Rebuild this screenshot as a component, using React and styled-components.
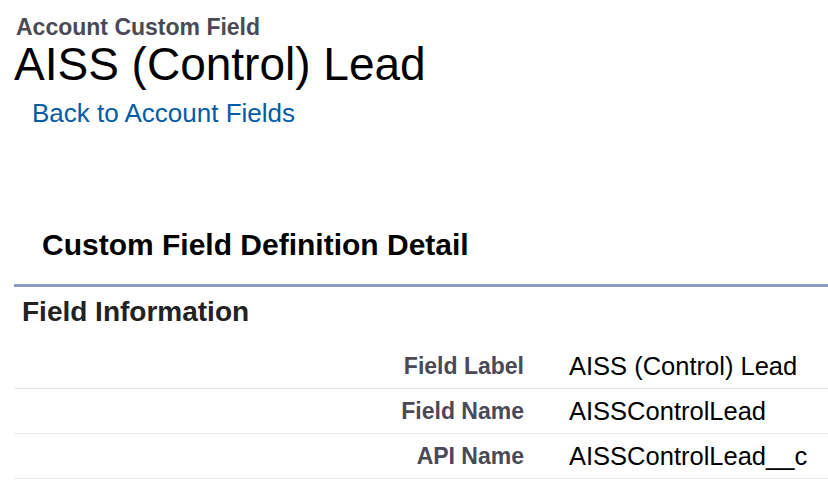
import React from 'react';
import styled, {createGlobalStyle} from 'styled-components';

const GlobalStyle = createGlobalStyle`
    body {
        margin:0;
        background:#fff;
        font-family:"Liberation Sans", Arial, sans-serif;
    }
`;

const Page = styled.div`
    width:828px;
    height:482px;
    overflow:hidden;
    display:flex;
    flex-direction:column;
    padding-left:14px;
    box-sizing:border-box;
`;

const PageType = styled.h2`
    margin:14px 0 0 2px;
    font-size:23px;
    line-height:26px;
    font-weight:700;
    color:#4a4a56;
`;

const PageTitle = styled.h1`
    margin:0;
    font-size:46px;
    line-height:48px;
    font-weight:400;
    color:#000;
`;

const BackLink = styled.a`
    align-self:flex-start;
    display:block;
    margin:10px 0 0 18px;
    font-size:26px;
    line-height:30px;
    color:#015ba7;
    text-decoration:none;
`;

const DetailTitle = styled.h2`
    margin:100px 0 0 28px;
    font-size:30px;
    line-height:34px;
    font-weight:700;
    color:#000;
`;

const Block = styled.div`
    margin-top:22px;
    border-top:3px solid #8e9cc4;
`;

const SectionTitle = styled.h3`
    margin:9px 0 16px 8px;
    font-size:28px;
    line-height:32px;
    font-weight:700;
    color:#222;
`;

const Row = styled.div`
    display:grid;
    grid-template-columns:510px 1fr;
    column-gap:45px;
    height:44px;
    border-bottom:1px solid #e6e6e6;
    align-items:center;
`;

const Label = styled.div`
    text-align:right;
    font-size:23px;
    line-height:44px;
    font-weight:700;
    color:#4a4a56;
`;

const Value = styled.div`
    font-size:25.5px;
    line-height:44px;
    color:#000;
`;

const fields = [
    {label: 'Field Label', value: 'AISS (Control) Lead'},
    {label: 'Field Name', value: 'AISSControlLead'},
    {label: 'API Name', value: 'AISSControlLead__c'},
];

const App = () => (
    <>
        <GlobalStyle />
        <Page>
            <PageType>Account Custom Field</PageType>
            <PageTitle>AISS (Control) Lead</PageTitle>
            <BackLink href="#">Back to Account Fields</BackLink>
            <DetailTitle>Custom Field Definition Detail</DetailTitle>
            <Block>
                <SectionTitle>Field Information</SectionTitle>
                {fields.map(f => (
                    <Row key={f.label}>
                        <Label>{f.label}</Label>
                        <Value>{f.value}</Value>
                    </Row>
                ))}
            </Block>
        </Page>
    </>
);

export default App;
